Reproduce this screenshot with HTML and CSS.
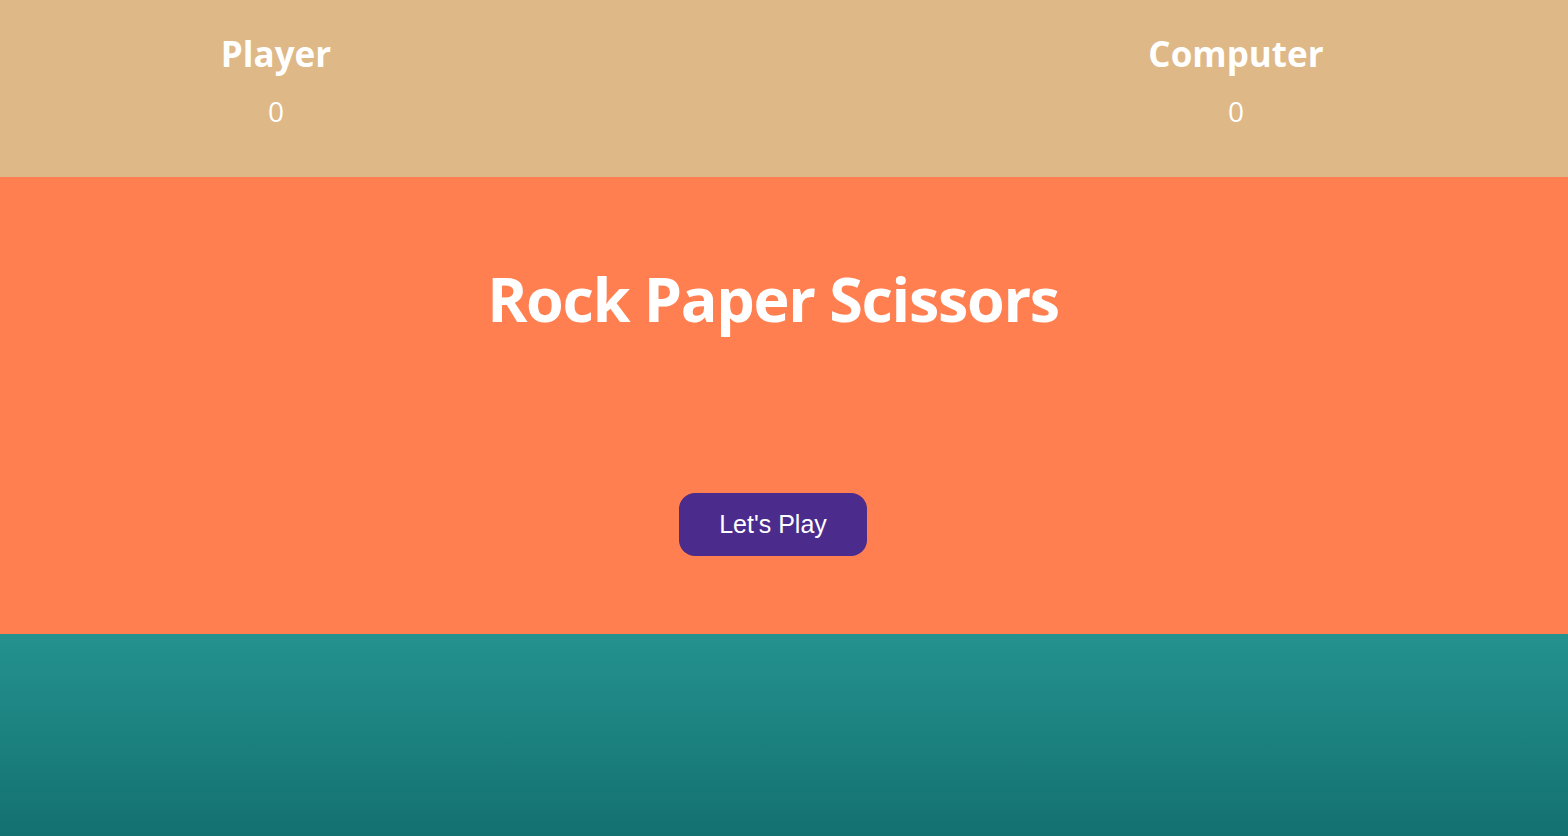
FILE: index.html
```html
<!DOCTYPE html>
<html>
<head>
<meta charset="utf-8">
<link rel="stylesheet" href="styles.css">
</head>
<body>
<header class="scores">
  <div class="score">
    <h2 class="score-name">Player</h2>
    <p class="score-value">0</p>
  </div>
  <div class="score">
    <h2 class="score-name">Computer</h2>
    <p class="score-value">0</p>
  </div>
</header>
<main class="game">
  <h1 class="title">Rock Paper Scissors</h1>
  <button class="play-btn">Let's Play</button>
</main>
<footer class="bottom"></footer>
</body>
</html>
```
FILE: styles.css
```css
* { box-sizing: border-box; }
html, body { margin: 0; padding: 0; height: 100%; }
body {
  font-family: "Open Sans", "Noto Sans", sans-serif;
  color: #fff;
  display: flex;
  flex-direction: column;
  background: #137170;
}
.scores {
  background: #deb887;
  height: 177px;
  display: flex;
  justify-content: space-between;
  padding: 0 232px 0 176px;
}
.score {
  width: 200px;
  text-align: center;
}
.score-name {
  margin: 30px 0 0;
  font-size: 35px;
  font-weight: 700;
  line-height: 48px;
}
.score-value {
  margin: 15px 0 0;
  font-size: 28px;
  font-weight: 400;
  line-height: 36px;
}
.game {
  background: #ff7f50;
  height: 457px;
  display: flex;
  flex-direction: column;
  align-items: center;
  padding-right: 22px;
}
.title {
  margin: 82px 0 0;
  font-size: 61px;
  font-weight: 700;
  line-height: 80px;
  letter-spacing: -1.3px;
}
.play-btn {
  margin-top: 154px;
  width: 188px;
  height: 63px;
  border: none;
  border-radius: 16px;
  background: #4b2b8c;
  color: #fff;
  font-family: "Liberation Sans", Arial, sans-serif;
  font-size: 25px;
}
.bottom {
  flex: 1;
  background: linear-gradient(#24928f, #137170);
}
```
